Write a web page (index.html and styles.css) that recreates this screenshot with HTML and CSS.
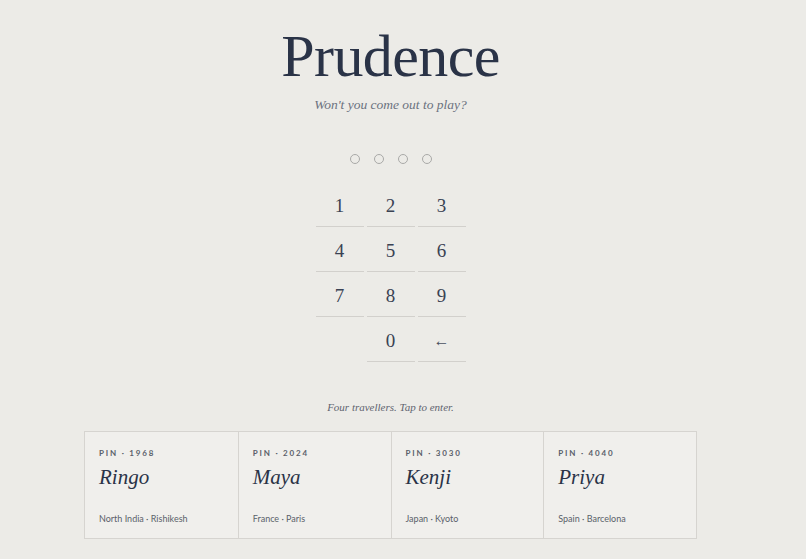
FILE: index.html
```html
<!DOCTYPE html>
<html lang="en">
<head>
<meta charset="utf-8">
<title>Prudence</title>
<link rel="stylesheet" href="styles.css">
</head>
<body>
<main class="page">
  <h1 class="title">Prudence</h1>
  <p class="subtitle">Won't you come out to play?</p>
  <div class="dots">
    <span class="dot"></span><span class="dot"></span><span class="dot"></span><span class="dot"></span>
  </div>
  <div class="keypad">
    <button class="key">1</button>
    <button class="key">2</button>
    <button class="key">3</button>
    <button class="key">4</button>
    <button class="key">5</button>
    <button class="key">6</button>
    <button class="key">7</button>
    <button class="key">8</button>
    <button class="key">9</button>
    <span class="key empty"></span>
    <button class="key">0</button>
    <button class="key back">←</button>
  </div>
  <p class="hint">Four travellers. Tap to enter.</p>
  <div class="cards">
    <div class="card">
      <div class="pin">PIN · 1968</div>
      <div class="name">Ringo</div>
      <div class="place">North India · Rishikesh</div>
    </div>
    <div class="card">
      <div class="pin">PIN · 2024</div>
      <div class="name">Maya</div>
      <div class="place">France · Paris</div>
    </div>
    <div class="card">
      <div class="pin">PIN · 3030</div>
      <div class="name">Kenji</div>
      <div class="place">Japan · Kyoto</div>
    </div>
    <div class="card">
      <div class="pin">PIN · 4040</div>
      <div class="name">Priya</div>
      <div class="place">Spain · Barcelona</div>
    </div>
  </div>
</main>
</body>
</html>
```
FILE: styles.css
```css
* { box-sizing: border-box; }
html, body {
  margin: 0;
  padding: 0;
  background: #ecebe7;
  color: #2a3347;
  font-family: "Liberation Serif", "DejaVu Serif", serif;
}
.page {
  display: flex;
  flex-direction: column;
  align-items: center;
  padding-top: 21px;
  padding-right: 25px;
}
.title {
  margin: 0;
  font-weight: 400;
  font-size: 60px;
  line-height: 70px;
  letter-spacing: -0.6px;
  color: #2a3347;
}
.subtitle {
  margin: 5px 0 0 0;
  font-style: italic;
  font-size: 13.5px;
  line-height: 18px;
  color: #6b7280;
}
.dots {
  display: flex;
  gap: 14px;
  margin-top: 40px;
}
.dot {
  width: 10px;
  height: 10px;
  border: 1px solid #a9a9a7;
  border-radius: 50%;
}
.keypad {
  display: grid;
  grid-template-columns: repeat(3, 48px);
  grid-auto-rows: 45px;
  column-gap: 3px;
  row-gap: 0;
  margin-top: 18px;
}
.key {
  border: 0;
  border-bottom: 1px solid #d2d0cc;
  background: transparent;
  font-family: "Liberation Serif", "DejaVu Serif", serif;
  font-size: 19px;
  color: #3a4253;
  padding: 3px 0 0 0;
  display: flex;
  align-items: center;
  justify-content: center;
}
.key.empty { border-bottom: 0; }
.key.back { font-size: 16px; color: #4a5060; }
.hint {
  margin: 38px 0 0 0;
  font-style: italic;
  font-size: 11px;
  line-height: 14px;
  color: #5f6470;
}
.cards {
  display: grid;
  grid-template-columns: repeat(4, 1fr);
  width: 613px;
  margin-top: 17px;
  border: 1px solid #d6d4d0;
  background: #f0efec;
}
.card {
  height: 106px;
  padding: 16px 14px 0 14px;
  border-left: 1px solid #d6d4d0;
  display: flex;
  flex-direction: column;
}
.card:first-child { border-left: 0; }
.pin {
  font-family: "Lato", "Liberation Sans", sans-serif;
  font-size: 8px;
  font-weight: 700;
  letter-spacing: 1.8px;
  color: #5a5f6a;
  line-height: 10px;
}
.name {
  margin-top: 7px;
  font-style: italic;
  font-size: 21px;
  line-height: 24px;
  color: #2a3347;
}
.place {
  margin-top: 24px;
  font-family: "Lato", "Liberation Sans", sans-serif;
  font-size: 9px;
  line-height: 12px;
  color: #5a5f6a;
}
```
